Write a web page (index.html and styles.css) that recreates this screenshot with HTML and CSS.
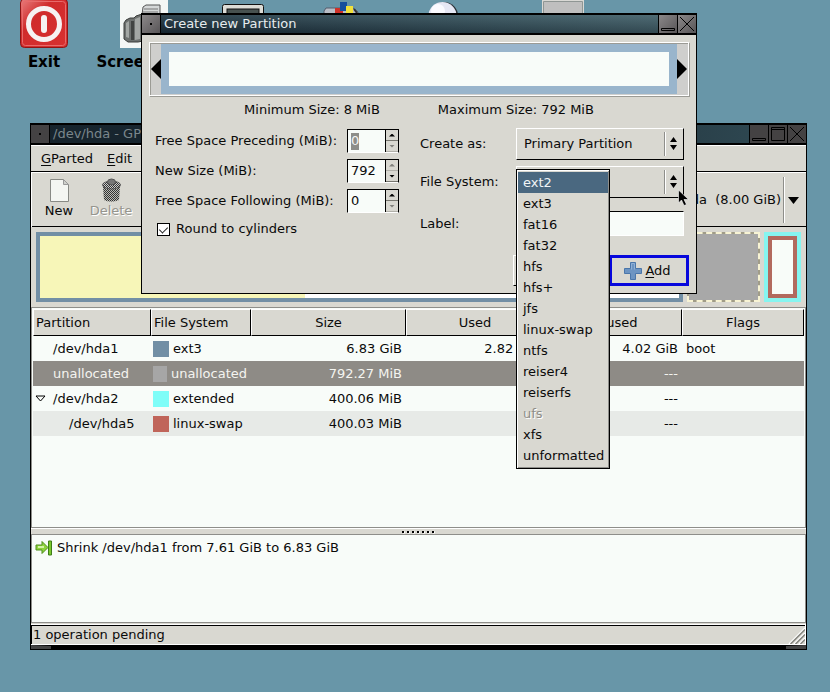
FILE: index.html
```html
<!DOCTYPE html>
<html lang="en">
<head>
<meta charset="utf-8">
<title>GParted</title>
<link rel="stylesheet" href="styles.css">
</head>
<body>
<main class="desktop">
  <div class="launchers">
    <div class="launcher">
      <svg width="48" height="48" viewBox="0 0 48 48" aria-hidden="true">
        <defs><linearGradient id="red" x1="0" y1="0" x2="1" y2="1"><stop offset="0" stop-color="#e88080"/><stop offset=".35" stop-color="#d02c2c"/><stop offset="1" stop-color="#d83030"/></linearGradient></defs>
        <rect x=".5" y="-1" width="47" height="48.500" rx="4" fill="url(#red)" stroke="#8c1515"/>
        <rect x="2.500" y="1.500" width="43" height="44" rx="3" fill="none" stroke="#e86a6a"/>
        <circle cx="24" cy="24" r="15.500" fill="none" stroke="#f6f2f2" stroke-width="5"/>
        <path d="M24 18v12" stroke="#f6f2f2" stroke-width="6" stroke-linecap="round"/>
      </svg>
      <span>Exit</span>
    </div>
    <div class="launcher">
      <svg width="48" height="48" viewBox="0 0 48 48" aria-hidden="true">
        <path d="M0 0h48v48H0z" fill="#f4f7f5"/>
        <path d="M22 15l1-8 3-2h14v14H22z" fill="#d5d8d8" stroke="#555"/>
        <path d="M24 9h14M23 12h15" stroke="#777"/>
        <path d="M4 23l2-3 4-2h4l2-2 6-2h16v24l-20 4H8l-4-3z" fill="#6d716f" stroke="#3a3d3b"/>
        <path d="M6 23l3-2v17l-3-1zM15 19l5-2v22l-5 1z" fill="#a3a7a4"/>
        <path d="M11 21h3v19h-3z" fill="#414442"/>
      </svg>
      <span>Screenshot</span>
    </div>
    <div class="launcher">
      <svg width="48" height="48" viewBox="0 0 48 48" aria-hidden="true">
        <rect x="2.500" y="4.500" width="41" height="34" rx="2" fill="#dcdcd6" stroke="#111"/>
        <rect x="7" y="9" width="32" height="25" fill="#47514f" stroke="#111"/>
      </svg>
    </div>
    <div class="launcher">
      <svg width="48" height="48" viewBox="0 0 48 48" aria-hidden="true">
        <path d="M4 20V11l2-3h27l5 4v8z" fill="#b9bdc6" stroke="#555c6c"/>
        <path d="M15 8h8v8h-8z" fill="#cf3128"/>
        <path d="M20 2h7v9h-7z" fill="#164f9c"/>
        <path d="M26 6h7v9h-7z" fill="#f2e13b"/>
        <path d="M34 9l3 4" stroke="#333" stroke-width="2"/>
      </svg>
    </div>
    <div class="launcher">
      <svg width="48" height="48" viewBox="0 0 48 48" aria-hidden="true">
        <circle cx="24" cy="16" r="14" fill="#2b3036"/><circle cx="22.500" cy="16" r="14" fill="#e6e7f4"/><circle cx="18" cy="11" r="7" fill="#fafaff"/>
      </svg>
    </div>
    <div class="launcher">
      <svg width="48" height="48" viewBox="0 0 48 48" aria-hidden="true">
        <path d="M3 0h42v30H3z" fill="#d9d9d5"/><path d="M5 2h38v28H5z" fill="#bfbfbf"/><path d="M4.500 30V1.500H43.500V30" fill="none" stroke="#8f9694"/>
      </svg>
    </div>
  </div>

  <section class="window gparted" aria-label="/dev/hda - GParted">
    <header class="titlebar inactive">
      <button class="tb-button" aria-label="Window menu"><svg width="18" height="18" aria-hidden="true"><path d="M8 8h2v2H8z" fill="#000"/></svg></button>
      <h1 class="title">/dev/hda - GParted</h1>
      <button class="tb-button" aria-label="Minimize"><svg width="18" height="18" aria-hidden="true"><path d="M2.500 13.500h13v2h-13z" fill="none" stroke="#000"/></svg></button>
      <button class="tb-button" aria-label="Maximize"><svg width="18" height="18" aria-hidden="true"><path d="M2.500 2.500h13v13h-13zM2 4.500h14" fill="none" stroke="#000"/></svg></button>
      <button class="tb-button" aria-label="Close"><svg width="18" height="18" aria-hidden="true"><path d="M2 2l14 14M16 2L2 16" stroke="#000"/></svg></button>
    </header>
    <nav class="menubar">
      <button><u>G</u>Parted</button>
      <button><u>E</u>dit</button>
    </nav>
    <div class="toolbar">
      <button class="tool">
        <svg width="24" height="26" viewBox="0 0 24 26" aria-hidden="true"><path d="M3.500 2.500h13l5 5v17h-18z" fill="#f4f6f2" stroke="#888a85"/><path d="M16.500 2.500v5h5z" fill="#cfd1cc" stroke="#999"/></svg>
        <span>New</span>
      </button>
      <button class="tool" disabled>
        <svg width="24" height="26" viewBox="0 0 24 26" aria-hidden="true">
          <defs><pattern id="dither" width="2" height="2" patternUnits="userSpaceOnUse"><path d="M0 0h1v1H0zM1 1h1v1H1z" fill="#333"/></pattern></defs>
          <path d="M4 9h17l-1 14q-8 3-15 0z" fill="#b9bab4"/><path d="M4 9h17l-1 14q-8 3-15 0z" fill="url(#dither)"/>
          <ellipse cx="12.500" cy="8" rx="9" ry="4" fill="#ccc" stroke="#666"/><ellipse cx="12.500" cy="8" rx="9" ry="4" fill="url(#dither)"/>
          <ellipse cx="12.500" cy="5" rx="4" ry="3" fill="#777" stroke="#555"/>
        </svg>
        <span>Delete</span>
      </button>
      <div class="device">
        <select aria-label="Device"><option>/dev/hda&nbsp; (8.00 GiB)</option></select>
        <svg class="device-arrow" width="13" height="7" aria-hidden="true"><path d="M1 0h11L6.500 7z" fill="#000"/></svg>
      </div>
    </div>

    <div class="disk-map">
      <div class="disk-part ext3"><div class="disk-used"></div></div>
      <div class="disk-part free"></div>
      <div class="disk-part extended"><div class="logical"></div></div>
    </div>

    <div class="tree">
      <table>
        <colgroup><col class="c-part"><col class="c-fs"><col class="c-size"><col class="c-used"><col class="c-unused"><col></colgroup>
        <thead>
          <tr><th class="left">Partition</th><th class="left">File System</th><th>Size</th><th>Used</th><th>Unused</th><th>Flags</th></tr>
        </thead>
        <tbody>
          <tr><td class="name">/dev/hda1</td><td><span class="fs"><i class="swatch sw-ext3"></i>ext3</span></td><td class="num">6.83 GiB</td><td class="num">2.82 GiB</td><td class="num">4.02 GiB</td><td class="flags">boot</td></tr>
          <tr class="selected"><td class="name">unallocated</td><td><span class="fs"><i class="swatch sw-free"></i>unallocated</span></td><td class="num">792.27 MiB</td><td></td><td class="num">---</td><td></td></tr>
          <tr><td class="parent"><span class="fs"><svg width="11" height="8" aria-hidden="true"><path d="M1 1h9L5.500 6z" fill="none" stroke="#000"/></svg>/dev/hda2</span></td><td><span class="fs"><i class="swatch sw-ext"></i>extended</span></td><td class="num">400.06 MiB</td><td></td><td class="num">---</td><td></td></tr>
          <tr class="odd"><td class="name child">/dev/hda5</td><td><span class="fs"><i class="swatch sw-swap"></i>linux-swap</span></td><td class="num">400.03 MiB</td><td></td><td class="num">---</td><td></td></tr>
        </tbody>
      </table>
    </div>

    <div class="pane-handle"><svg width="34" height="4" aria-hidden="true"><path d="M1 2.500h33" stroke="#fff" stroke-width="2" stroke-dasharray="2 3"/><path d="M0 2h33" stroke="#000" stroke-width="2" stroke-dasharray="2 3"/></svg></div>

    <div class="operations">
      <div class="operation">
        <svg width="18" height="16" viewBox="0 0 18 16" aria-hidden="true"><path d="M1 5h6V1.500l6 6-6 6V10H1z" fill="#8ed43c" stroke="#4e8f1c"/><path d="M3 7h6" stroke="#d4f3a5" stroke-width="2"/><path d="M13.500 1h3v14h-3z" fill="#79c92c" stroke="#3f7d18"/></svg>
        <span>Shrink /dev/hda1 from 7.61 GiB to 6.83 GiB</span>
      </div>
    </div>

    <footer class="status">
      <span>1 operation pending</span>
      <svg width="17" height="17" aria-hidden="true"><path d="M1 17L17 1M6 17L17 6M11 17l6-6" stroke="#fff" stroke-width="1.500"/><path d="M2.500 17L17 2.500M7.500 17L17 7.500M12.500 17l4.500-4.500" stroke="#84847e" stroke-width="1.500"/></svg>
    </footer>
    <div class="resize-bar"></div>
  </section>

  <section class="window dialog" role="dialog" aria-label="Create new Partition">
    <header class="titlebar">
      <button class="tb-button" aria-label="Window menu"><svg width="18" height="18" aria-hidden="true"><path d="M8 8h2v2H8z" fill="#000"/></svg></button>
      <h2 class="title">Create new Partition</h2>
      <button class="tb-button" aria-label="Minimize"><svg width="18" height="18" aria-hidden="true"><path d="M2.500 13.500h13v2h-13z" fill="none" stroke="#000"/></svg></button>
      <button class="tb-button" aria-label="Close"><svg width="18" height="18" aria-hidden="true"><path d="M2 2l14 14M16 2L2 16" stroke="#000"/></svg></button>
    </header>
    <div class="dialog-body">
      <div class="resizer">
        <svg width="10" height="20" aria-hidden="true"><path d="M10 0v20L0 10z" fill="#000"/></svg>
        <div class="resizer-area"></div>
        <svg width="10" height="20" aria-hidden="true"><path d="M0 0v20l10-10z" fill="#000"/></svg>
      </div>
      <div class="limits"><span>Minimum Size: 8 MiB</span><span>Maximum Size: 792 MiB</span></div>
      <form class="columns">
        <div class="sizes">
          <div class="size-row">
            <label for="before">Free Space Preceding (MiB):</label>
            <div class="spin"><input id="before" class="marked" value="0"><div class="steps"><button type="button" aria-label="Increase"><i class="up"></i></button><button type="button" disabled aria-label="Decrease"><i class="down"></i></button></div></div>
          </div>
          <div class="size-row">
            <label for="size">New Size (MiB):</label>
            <div class="spin"><input id="size" value="792"><div class="steps"><button type="button" disabled aria-label="Increase"><i class="up"></i></button><button type="button" aria-label="Decrease"><i class="down"></i></button></div></div>
          </div>
          <div class="size-row">
            <label for="after">Free Space Following (MiB):</label>
            <div class="spin"><input id="after" value="0"><div class="steps"><button type="button" aria-label="Increase"><i class="up"></i></button><button type="button" disabled aria-label="Decrease"><i class="down"></i></button></div></div>
          </div>
          <label class="round"><input type="checkbox" checked>Round to cylinders</label>
        </div>
        <div class="options">
          <label for="kind">Create as:</label>
          <div class="combo">
            <select id="kind"><option>Primary Partition</option></select>
            <svg class="combo-arrows" width="9" height="14" aria-hidden="true"><path d="M1 5h7L4.500 0zM1 8h7l-3.500 5z" fill="#000"/></svg>
          </div>
          <label for="fs">File System:</label>
          <div class="combo">
            <select id="fs"></select>
            <svg class="combo-arrows" width="9" height="14" aria-hidden="true"><path d="M1 5h7L4.500 0zM1 8h7l-3.500 5z" fill="#000"/></svg>
            <ul class="popup" role="listbox" aria-label="File systems">
              <li role="option" aria-selected="true">ext2</li>
              <li role="option">ext3</li>
              <li role="option">fat16</li>
              <li role="option">fat32</li>
              <li role="option">hfs</li>
              <li role="option">hfs+</li>
              <li role="option">jfs</li>
              <li role="option">linux-swap</li>
              <li role="option">ntfs</li>
              <li role="option">reiser4</li>
              <li role="option">reiserfs</li>
              <li role="option" aria-disabled="true">ufs</li>
              <li role="option">xfs</li>
              <li role="option">unformatted</li>
            </ul>
          </div>
          <label for="label">Label:</label>
          <input id="label" class="entry">
        </div>
      </form>
      <div class="actions">
        <button class="action" aria-label="Cancel"></button>
        <button class="action add">
          <svg width="20" height="20" aria-hidden="true"><path d="M7.500 1.500h5v6h6v5h-6v6h-5v-6h-6v-5h6z" fill="#6c94c2" stroke="#4a76aa"/><path d="M8.500 8.500v-6h3v6" fill="none" stroke="#8fb0d6"/></svg>
          <span><u>A</u>dd</span>
        </button>
      </div>
    </div>
    <svg class="pointer" width="12" height="18" aria-hidden="true"><path d="M.5 1v13l3-3 2.500 5.500 2.500-1L6 10.500h4.500z" fill="#000" stroke="#fff" stroke-width=".6"/></svg>
  </section>
</main>
</body>
</html>
```
FILE: styles.css
```css
* { box-sizing: border-box; }

:root {
  --face: #d9d8d1;
  --paper: #f8fcf9;
  --shade: #8e8e8a;
}

body {
  margin: 0;
  background: #6896a8;
  color: #0a0a0a;
  font: 13px/16px "DejaVu Sans", sans-serif;
}

button, input, select {
  margin: 0;
  padding: 0;
  border: 0;
  border-radius: 0;
  background: none;
  color: inherit;
  font: inherit;
  outline: 0;
}

select { appearance: none; }
svg { display: block; flex: none; }
u { text-underline-offset: 2px; }

.desktop {
  position: relative;
  min-height: 100vh;
  overflow: hidden;
}

/* Desktop launchers */
.launchers {
  display: grid;
  grid-template-columns: 88px 112px 88px 112px 88px 150px;
}

.launcher {
  display: flex;
  flex-direction: column;
  align-items: center;
  gap: 5px;
  color: #000;
  font-size: 15px;
  font-weight: bold;
  line-height: 18px;
}

/* Window frames */
.window {
  position: absolute;
  display: flex;
  flex-direction: column;
  border: 1px solid #000;
  background: var(--face);
}

.gparted { left: 30px; right: 23px; top: 123px; }
.dialog { left: 141px; right: 133px; top: 13px; }

.titlebar {
  display: flex;
  height: 21px;
  border: solid #000;
  border-width: 1px 0 2px;
  background: linear-gradient(to bottom, rgba(95, 125, 135, .3), rgba(0, 10, 20, .3)), linear-gradient(to right, #1c2d38, #3b555e 65%, #4c6870);
  color: #e6ecee;
}

.titlebar.inactive {
  background: linear-gradient(to right, #16232c, #1d2e37 60%, #314b55);
  color: #7b878c;
}

.title {
  flex: 1;
  margin: 0;
  padding-left: 3px;
  font-size: 13px;
  font-weight: normal;
  line-height: 18px;
}

.tb-button {
  width: 19px;
  height: 18px;
  border-left: 1px solid #000;
  background: linear-gradient(135deg, #8b8889, #585557);
}

.tb-button:first-child { border-left: 0; border-right: 1px solid #000; }
.inactive .tb-button { background: #444243; }

/* Main window */
.menubar {
  display: flex;
  align-items: center;
  gap: 14px;
  height: 27px;
  padding-left: 10px;
  border-top: 1px solid #fff;
  border-bottom: 1px solid #000;
}

.toolbar {
  display: flex;
  height: 55px;
  padding: 4px 4px 5px 1px;
  border: solid #fff;
  border-width: 1px 0 0 1px;
  box-shadow: inset 0 -1px #000;
}

.tool {
  display: flex;
  flex-direction: column;
  align-items: center;
  width: 52px;
}

.tool:disabled { color: #96958e; text-shadow: 1px 1px #fff; }

.device {
  display: grid;
  flex: 1;
  align-items: center;
}

.device > * { grid-area: 1 / 1; }

.device select {
  justify-self: end;
  height: 46px;
  padding-right: 21px;
  text-align-last: right;
  background: linear-gradient(to right, #8e8e8a 50%, #fff 50%) right 17px top / 2px 100% no-repeat;
}

.device-arrow { justify-self: end; margin-right: 2px; }

.disk-map {
  display: grid;
  grid-template-columns: 647fr 73fr 37fr;
  gap: 4px;
  padding: 5px;
}

.disk-part { height: 70px; }

.ext3 { border: 4px solid #728fa5; background: #fff; }
.disk-used { width: 41.4%; height: 100%; background: #f7f6b8; }
.free { outline: 2px dashed #f8f4d4; outline-offset: -2px; border: 2px solid #a09c88; background: #a8a8a8; }
.extended { padding: 4px; background: #86f5f0; }
.logical { height: 100%; border: 4px solid #b26a5e; background: var(--paper); }

.tree {
  min-height: 221px;
  padding: 1px;
  border: 1px solid var(--shade);
  background: var(--paper);
}

table {
  width: 100%;
  border-spacing: 0;
  table-layout: fixed;
}

.c-part { width: 118px; }
.c-fs { width: 100px; }
.c-size { width: 155px; }
.c-used { width: 138px; }
.c-unused { width: 138px; }

th {
  height: 27px;
  padding: 0 2px;
  border: 1px solid #000;
  border-top-color: #fff;
  border-left-color: #fff;
  background: var(--face);
  font-weight: normal;
}

.left { text-align: left; }
td { height: 25px; padding: 0 4px 0 2px; white-space: nowrap; }
.name { padding-left: 20px; }
.child { padding-left: 36px; }
.flags { padding-left: 4px; }
.parent .fs { gap: 7px; }
.num { text-align: right; }
.selected { background: #8e8b86; color: #f4f4f0; }
.odd { background: #e7eae7; }

.fs { display: flex; align-items: center; gap: 4px; }
.swatch { width: 16px; height: 16px; }
.sw-ext3 { background: #728fa5; }
.sw-free { background: #a6a6a6; }
.sw-ext { background: #7ffdf8; }
.sw-swap { background: #c0655a; }

.pane-handle {
  display: flex;
  align-items: center;
  justify-content: center;
  height: 6px;
  border-top: 1px solid #fff;
}

.operations {
  min-height: 89px;
  padding: 5px 3px;
  border: 1px solid var(--shade);
  background: var(--paper);
}

.operation { display: flex; align-items: center; gap: 4px; }

.status {
  display: flex;
  align-items: flex-end;
  justify-content: space-between;
  height: 21px;
  padding-left: 1px;
  margin-top: 1px;
  border: solid #fff;
  border-width: 1px 1px 1px 0;
  box-shadow: inset 1px 1px #000;
}

.status span { padding-left: 1px; line-height: 18px; }

.resize-bar {
  height: 4px;
  border: solid #444;
  border-width: 0 20px;
  border-top: 1px solid #000;
  background: #000;
}

/* Dialog */
.dialog-body { padding: 7px; }

.resizer {
  display: flex;
  align-items: center;
  border: 1px solid #fff;
  padding: 1px;
  background: #cfcfcd;
  box-shadow: inset 1px 1px #9b9b95, 1px 1px #9b9b95;
}

.resizer-area {
  flex: 1;
  height: 50px;
  border: 8px solid #99b5cc;
  background: var(--paper);
}

.limits {
  display: flex;
  justify-content: center;
  gap: 58px;
  padding-top: 6px;
}

.columns {
  display: grid;
  grid-template-columns: 244px minmax(0, 1fr);
  gap: 21px;
  padding: 10px 5px 0 6px;
}

.sizes { padding-top: 1px; }

.size-row {
  display: flex;
  align-items: center;
  justify-content: space-between;
  height: 24px;
  margin-bottom: 6px;
}

.spin {
  display: flex;
  width: 52px;
  height: 24px;
  border: 1px solid #000;
  border-bottom-color: #fff;
  background: var(--paper);
}

.spin input { flex: 1; width: 0; padding-left: 3px; }

.spin .marked {
  color: #f4f4f4;
  background: linear-gradient(#8e8e8a, #8e8e8a) 3px 3px / 8px 17px no-repeat;
}

.steps {
  display: grid;
  grid-template-rows: 1fr 1fr;
  width: 13px;
  border-left: 1px solid #000;
  background: var(--face);
}

.steps button { display: grid; place-items: center; border-bottom: 1px solid #77766f; }
.steps button:disabled { opacity: .4; }
.up, .down { width: 6px; height: 3px; background: #000; clip-path: polygon(0 100%, 50% 0, 100% 100%); }
.down { clip-path: polygon(0 0, 100% 0, 50% 100%); }

.round { display: flex; align-items: center; gap: 6px; padding: 2px; }

.round input {
  appearance: none;
  width: 13px;
  height: 13px;
  border: 1px solid #000;
  background: #fff;
  display: grid;
  place-items: center;
}

.round input::after {
  content: "";
  width: 4px;
  height: 7px;
  border: solid #222;
  border-width: 0 1px 1px 0;
  transform: rotate(45deg);
}

.options {
  display: grid;
  grid-template-columns: 96px minmax(0, 1fr);
  grid-template-rows: 32px 32px 39px;
  row-gap: 6px;
  align-items: center;
}

.combo { position: relative; display: grid; align-items: center; height: 32px; }
.combo > select, .combo-arrows { grid-area: 1 / 1; }

.combo > select {
  height: 32px;
  padding-left: 7px;
  border: 1px solid #000;
  border-top-color: #fff;
  border-left-color: #fff;
  background: linear-gradient(to right, #8e8e8a 50%, #fff 50%) right 17px center / 2px 24px no-repeat;
}

.combo-arrows { justify-self: end; margin-right: 6px; }

.entry {
  width: 100%;
  height: 25px;
  border: 1px solid #000;
  border-right-color: #fff;
  border-bottom-color: #fff;
  background: var(--paper);
}

.popup {
  position: absolute;
  z-index: 2;
  top: 3px;
  left: 0;
  width: 94px;
  margin: 0;
  padding: 2px 1px;
  border: 1px solid #000;
  background: var(--face);
  box-shadow: inset 1px 1px #fff, inset -1px -1px #8e8e8a;
  list-style: none;
}

.popup li { padding-left: 5px; line-height: 21px; }
.popup [aria-selected="true"] { background: #4a6880; color: #f0f4f6; }
.popup [aria-disabled="true"] { color: #8e8e88; text-shadow: 1px 1px #fff; }

.actions {
  display: flex;
  justify-content: flex-end;
  gap: 4px;
  padding-top: 12px;
}

.action {
  width: 92px;
  height: 31px;
  border: 1px solid #fff;
  border-right-color: #000;
  border-bottom-color: #000;
}

.add {
  display: flex;
  align-items: center;
  justify-content: center;
  gap: 2px;
  width: 80px;
  padding-right: 4px;
  border: 3px solid #0707dc;
}

.pointer { position: absolute; right: 6px; top: 175px; z-index: 3; }
```
